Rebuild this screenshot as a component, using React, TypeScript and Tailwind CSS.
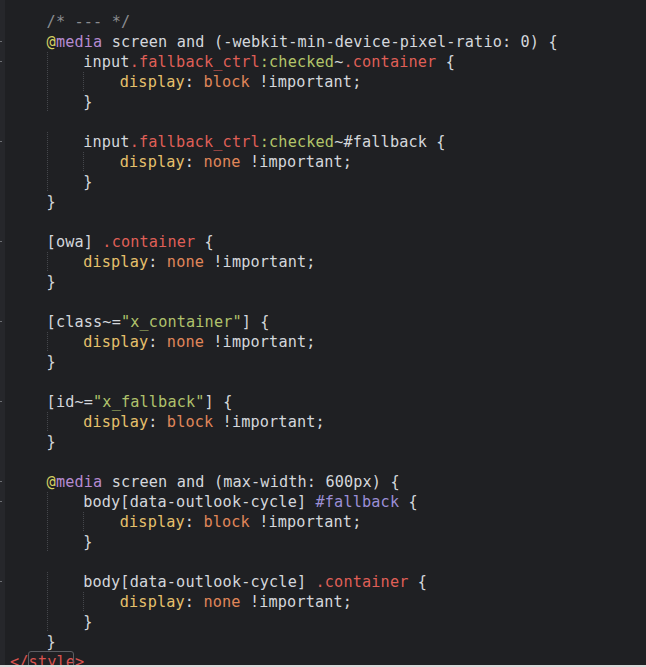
type Tok = [string, string];
type Line = { depth: number; toks: Tok[] };

const colors: Record<string, string> = {
  t: 'text-[#d4d7dc]',
  c: 'text-[#8b8d91]',
  at: 'text-[#d3cf62]',
  kw: 'text-[#b58bd1]',
  cls: 'text-[#df5f57]',
  ps: 'text-[#b3c56a]',
  id: 'text-[#9b8fd6]',
  prop: 'text-[#e6c16c]',
  val: 'text-[#e0875a]',
  str: 'text-[#b0c26c]',
  tag: 'text-[#d9534f]',
};

const decl = (v: string): Tok[] => [
  ['prop', 'display'],
  ['t', ': '],
  ['val', v],
  ['t', ' !important;'],
];

const lines: Line[] = [
  { depth: 1, toks: [['c', '/* --- */']] },
  { depth: 1, toks: [['at', '@'], ['kw', 'media'], ['t', ' screen and (-webkit-min-device-pixel-ratio: 0) {']] },
  { depth: 2, toks: [['t', 'input'], ['cls', '.fallback_ctrl'], ['ps', ':checked'], ['t', '~'], ['cls', '.container'], ['t', ' {']] },
  { depth: 3, toks: decl('block') },
  { depth: 2, toks: [['t', '}']] },
  { depth: 0, toks: [] },
  { depth: 2, toks: [['t', 'input'], ['cls', '.fallback_ctrl'], ['ps', ':checked'], ['t', '~#fallback {']] },
  { depth: 3, toks: decl('none') },
  { depth: 2, toks: [['t', '}']] },
  { depth: 1, toks: [['t', '}']] },
  { depth: 0, toks: [] },
  { depth: 1, toks: [['t', '[owa] '], ['cls', '.container'], ['t', ' {']] },
  { depth: 2, toks: decl('none') },
  { depth: 1, toks: [['t', '}']] },
  { depth: 0, toks: [] },
  { depth: 1, toks: [['t', '[class~='], ['str', '"x_container"'], ['t', '] {']] },
  { depth: 2, toks: decl('none') },
  { depth: 1, toks: [['t', '}']] },
  { depth: 0, toks: [] },
  { depth: 1, toks: [['t', '[id~='], ['str', '"x_fallback"'], ['t', '] {']] },
  { depth: 2, toks: decl('block') },
  { depth: 1, toks: [['t', '}']] },
  { depth: 0, toks: [] },
  { depth: 1, toks: [['at', '@'], ['kw', 'media'], ['t', ' screen and (max-width: 600px) {']] },
  { depth: 2, toks: [['t', 'body[data-outlook-cycle] '], ['id', '#fallback'], ['t', ' {']] },
  { depth: 3, toks: decl('block') },
  { depth: 2, toks: [['t', '}']] },
  { depth: 0, toks: [] },
  { depth: 2, toks: [['t', 'body[data-outlook-cycle] '], ['cls', '.container'], ['t', ' {']] },
  { depth: 3, toks: decl('none') },
  { depth: 2, toks: [['t', '}']] },
  { depth: 1, toks: [['t', '}']] },
];

// lines that open a block get a fold tick in the gutter
const foldRows = [1, 2, 6, 11, 15, 19, 23, 24, 28];

const Guide = ({ show }: { show: boolean }) => (
  <span
    className={`inline-block h-[20px] w-[36.6px] align-top ${
      show
        ? 'bg-[repeating-linear-gradient(to_bottom,#45474c_0_1px,transparent_1px_2px)] bg-no-repeat bg-[length:1px_100%]'
        : ''
    }`}
  />
);

const CodeLine = ({ line }: { line: Line }) => (
  <div className="h-[20px] leading-[20px] whitespace-pre">
    {Array.from({ length: line.depth }).map((_, i) => (
      <Guide key={i} show={i > 0} />
    ))}
    {line.toks.map(([k, s], i) => (
      <span key={i} className={colors[k]}>
        {s}
      </span>
    ))}
  </div>
);

export default function App() {
  return (
    <div className="w-[646px] h-[667px] overflow-hidden bg-[#1f2023] flex flex-col">
      <div className="flex flex-1 min-h-0 overflow-hidden">
        {/* gutter */}
        <div className="w-[5px] bg-[#26272b] pt-[12px] flex flex-col">
          {lines.map((_, i) => (
            <div key={i} className="h-[20px] relative">
              {foldRows.includes(i) && <div className="absolute left-0 top-[9px] w-[2px] h-[1px] bg-[#6b6d72]" />}
            </div>
          ))}
        </div>
        {/* editor */}
        <div
          className="flex-1 pl-[5px] pt-[12px] text-[15.2px] tracking-[0.15px]"
          style={{ fontFamily: '"DejaVu Sans Mono", "Liberation Mono", monospace' }}
        >
          {lines.map((l, i) => (
            <CodeLine key={i} line={l} />
          ))}
          <div className="h-[20px] leading-[20px] whitespace-pre relative">
            <span className={colors.tag}>{'</style>'}</span>
            <span className="absolute left-[18px] top-[-1px] w-[46px] h-[22px] border border-[#5c5e63] rounded-[3px]" />
          </div>
        </div>
      </div>
      <div className="h-[2px] bg-[#d9d9d9] shrink-0" />
    </div>
  );
}
